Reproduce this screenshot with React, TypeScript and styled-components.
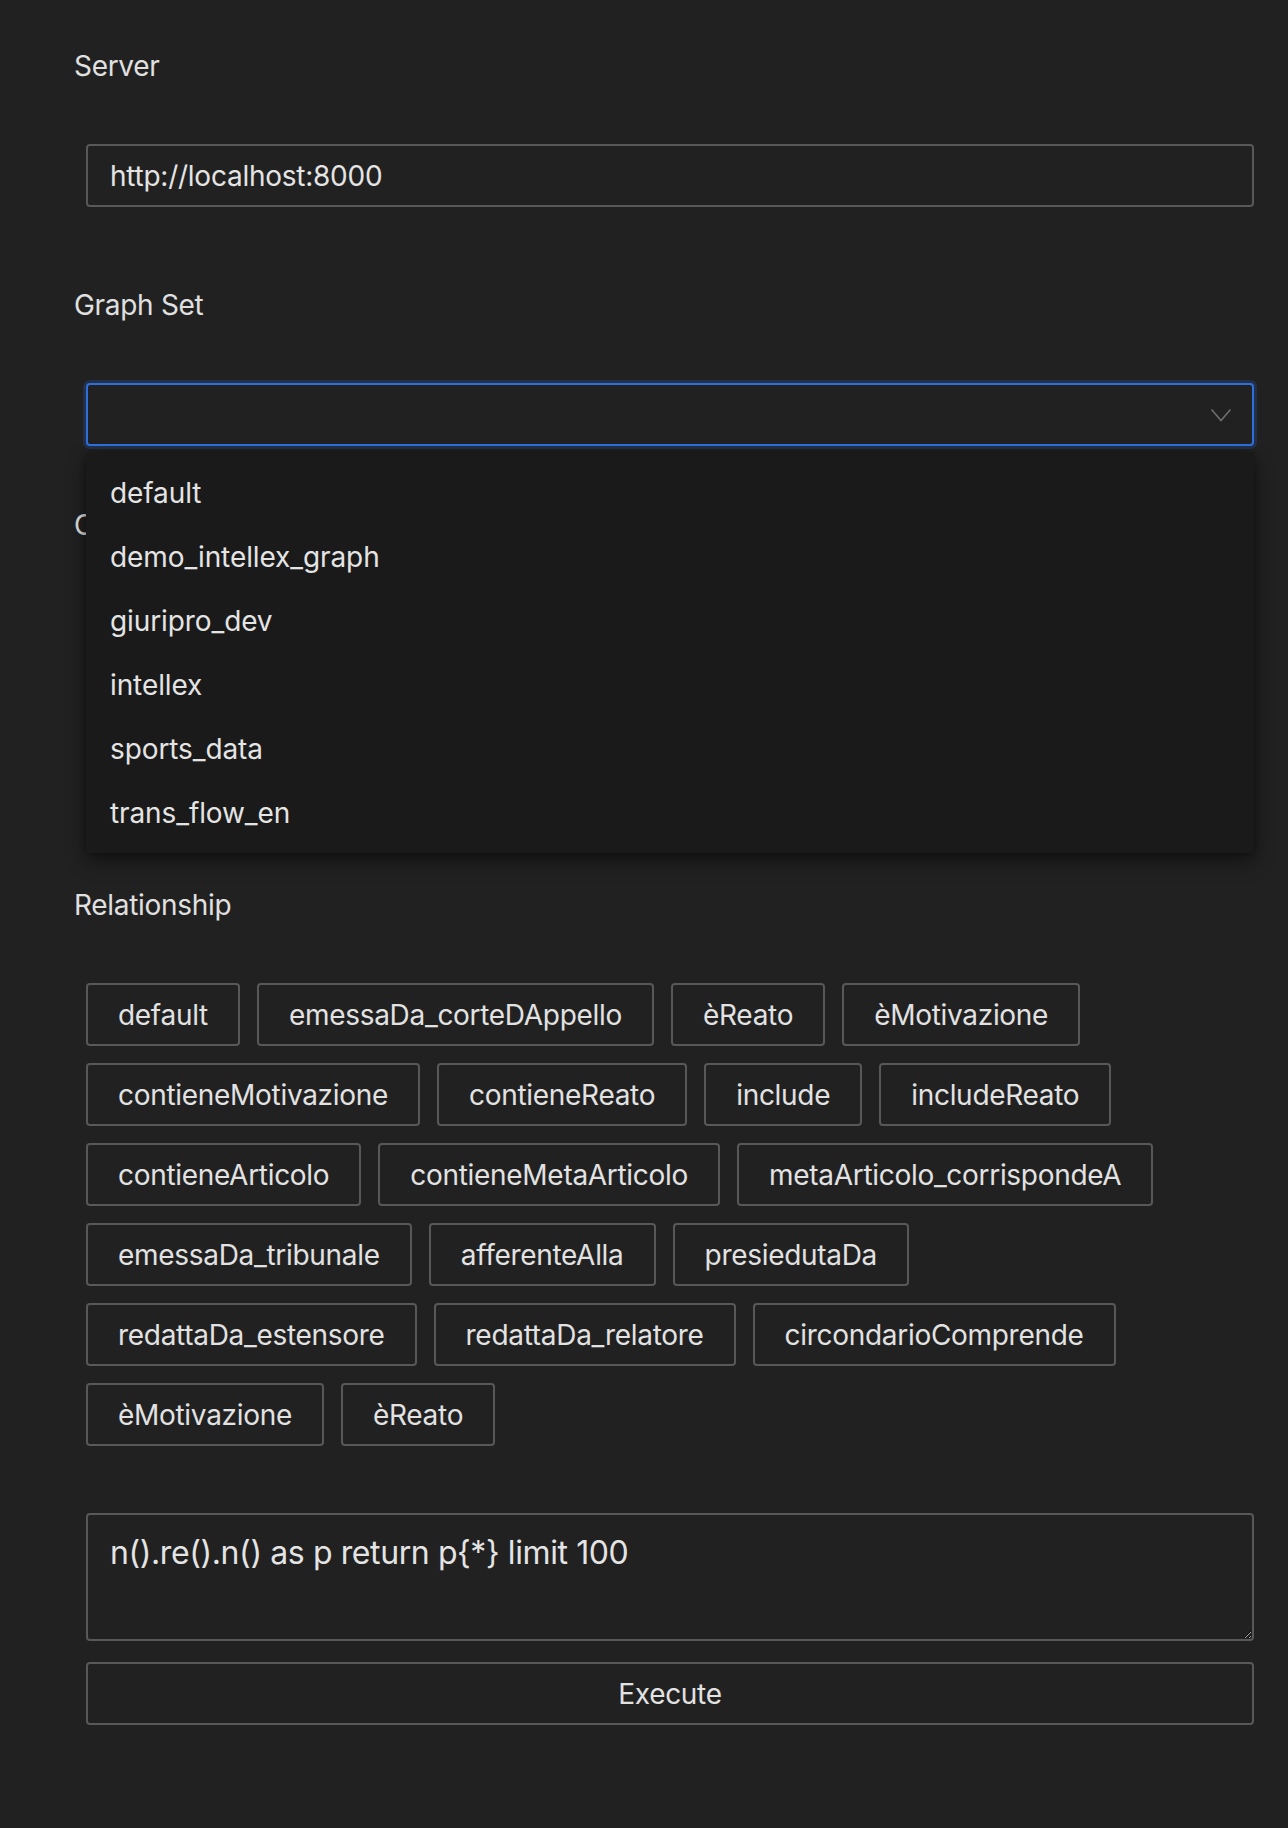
import React from "react";
import styled, { createGlobalStyle } from "styled-components";

const GlobalStyle = createGlobalStyle`
  html, body {
    margin: 0;
    padding: 0;
    background: #212121;
    color-scheme: dark;
  }
  body {
    font-family: Inter, "Noto Sans", "Liberation Sans", sans-serif;
    color: #e2e2e2;
  }
  * { box-sizing: border-box; }
`;

const Page = styled.div`
  padding: 46px 34px 100px 74px;
  display: flex;
  flex-direction: column;
  min-height: 1828px;
`;

const Field = styled.section<{ $top?: number }>`
  display: flex;
  flex-direction: column;
  margin-top: ${(p) => p.$top ?? 0}px;
`;

const Label = styled.div`
  font-size: 28px;
  line-height: 40px;
  height: 40px;
  color: #e0e0e0;
  margin-bottom: 58px;
  letter-spacing: -0.3px;
`;

const Control = styled.div`
  margin-left: 12px;
  position: relative;
`;

const TextInput = styled.input`
  width: 100%;
  height: 63px;
  background: #212121;
  border: 2px solid #585858;
  border-radius: 4px;
  padding: 0 22px;
  font-family: inherit;
  font-size: 28px;
  color: #e4e4e4;
  letter-spacing: -0.25px;
  outline: none;
`;

const SelectBox = styled.div`
  height: 63px;
  border: 2px solid #2f6fdb;
  border-radius: 4px;
  box-shadow: 0 0 0 3px rgba(38, 92, 180, 0.28);
  background: #212121;
  display: flex;
  align-items: center;
  justify-content: flex-end;
  padding-right: 20px;
`;

const Menu = styled.ul`
  position: absolute;
  top: 70px;
  left: 0;
  right: 0;
  margin: 0;
  padding: 8px 0;
  list-style: none;
  background: #1a1a1a;
  border-radius: 4px;
  box-shadow: 0 8px 20px rgba(0, 0, 0, 0.45), 0 0 6px rgba(0, 0, 0, 0.3);
  z-index: 10;
`;

const MenuItem = styled.li`
  height: 64px;
  line-height: 64px;
  padding: 0 24px;
  font-size: 28px;
  color: #e4e4e4;
  letter-spacing: -0.1px;
`;

const TagGroup = styled.div<{ $height?: number }>`
  display: flex;
  flex-direction: column;
  gap: 17px;
  ${(p) => (p.$height ? `height: ${p.$height}px; overflow: hidden;` : "")}
`;

const TagRow = styled.div`
  display: flex;
  gap: 17px;
`;

const Tag = styled.button`
  height: 63px;
  padding: 0 30px;
  background: #212121;
  border: 2px solid #585858;
  border-radius: 4px;
  font-family: inherit;
  font-size: 28px;
  color: #e2e2e2;
  letter-spacing: -0.3px;
  white-space: nowrap;
  cursor: pointer;
`;

const QueryArea = styled.textarea`
  display: block;
  width: 100%;
  height: 128px;
  margin-top: 67px;
  background: #212121;
  border: 2px solid #585858;
  border-radius: 4px;
  padding: 16px 22px 12px;
  font-family: inherit;
  font-size: 32px;
  line-height: 44px;
  color: #e4e4e4;
  letter-spacing: -0.4px;
  resize: vertical;
  outline: none;
`;

const ExecuteButton = styled.button`
  display: block;
  width: 100%;
  height: 63px;
  margin-top: 21px;
  background: #212121;
  border: 2px solid #585858;
  border-radius: 4px;
  font-family: inherit;
  font-size: 28px;
  color: #e2e2e2;
  letter-spacing: -0.3px;
  cursor: pointer;
`;

const Chevron = () => (
  <svg width="22" height="14" viewBox="0 0 22 14" fill="none">
    <polyline points="1.5,1.5 11,12.5 20.5,1.5" stroke="#6e6e6e" strokeWidth="1.6" fill="none" />
  </svg>
);

const graphSets = ["default", "demo_intellex_graph", "giuripro_dev", "intellex", "sports_data", "trans_flow_en"];

const relationshipRows = [
  ["default", "emessaDa_corteDAppello", "èReato", "èMotivazione"],
  ["contieneMotivazione", "contieneReato", "include", "includeReato"],
  ["contieneArticolo", "contieneMetaArticolo", "metaArticolo_corrispondeA"],
  ["emessaDa_tribunale", "afferenteAlla", "presiedutaDa"],
  ["redattaDa_estensore", "redattaDa_relatore", "circondarioComprende"],
  ["èMotivazione", "èReato"],
];

const TagRows = ({ rows, height }: { rows: string[][]; height?: number }) => (
  <TagGroup $height={height}>
    {rows.map((row, ri) => (
      <TagRow key={ri}>
        {row.map((t, ti) => (
          <Tag key={t + ti}>{t}</Tag>
        ))}
      </TagRow>
    ))}
  </TagGroup>
);

export default function App() {
  return (
    <>
      <GlobalStyle />
      <Page>
        <Field>
          <Label>Server</Label>
          <Control>
            <TextInput defaultValue="http://localhost:8000" />
          </Control>
        </Field>

        <Field $top={78}>
          <Label>Graph Set</Label>
          <Control>
            <SelectBox>
              <Chevron />
            </SelectBox>
            <Menu>
              {graphSets.map((g) => (
                <MenuItem key={g}>{g}</MenuItem>
              ))}
            </Menu>
          </Control>
        </Field>

        <Field $top={59}>
          <Label>Concept</Label>
          <Control>
            <TagRows rows={[]} height={204} />
          </Control>
        </Field>

        <Field $top={78}>
          <Label>Relationship</Label>
          <Control>
            <TagRows rows={relationshipRows} />
          </Control>
        </Field>

        <Control>
          <QueryArea defaultValue="n().re().n() as p return p{*} limit 100" />
          <ExecuteButton>Execute</ExecuteButton>
        </Control>
      </Page>
    </>
  );
}
